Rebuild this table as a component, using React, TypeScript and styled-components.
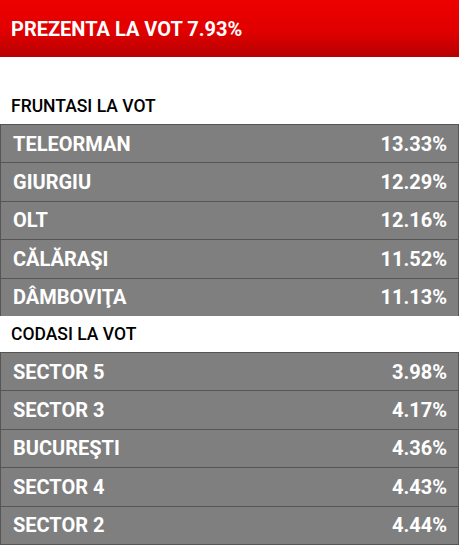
import styled, { createGlobalStyle } from 'styled-components'

const GlobalStyle = createGlobalStyle`
  body {
    margin: 0;
    background: #ffffff;
    font-family: Roboto, "Liberation Sans", Arial, sans-serif;
  }
`

const Widget = styled.div`
  width: 459px;
  display: flex;
  flex-direction: column;
`

const Banner = styled.div`
  height: 57px;
  display: flex;
  align-items: center;
  padding: 0 11px;
  background: linear-gradient(180deg, #ee0000 0%, #e00000 55%, #b70000 100%);
  color: #ffffff;
  font-size: 20px;
  font-weight: 700;
  box-sizing: border-box;
  margin-bottom: 31px;
`

const SectionLabel = styled.div`
  height: 36px;
  display: flex;
  align-items: center;
  padding: 0 11px;
  color: #000000;
  font-size: 17.5px;
  font-weight: 500;
`

const Table = styled.div`
  display: flex;
  flex-direction: column;
  border: 1px solid #555555;
  border-top: none;
  border-bottom: none;
`

const Row = styled.div<{ $last?: boolean }>`
  height: 37.4px;
  display: flex;
  align-items: center;
  justify-content: space-between;
  padding: 0 11px 0 12px;
  background: #7f7f7f;
  border-top: 1px solid #555555;
  border-bottom: ${(p) => (p.$last ? '1px solid #555555' : 'none')};
  color: #ffffff;
  font-size: 20px;
  font-weight: 700;
`

const fruntasi = [
  ['TELEORMAN', '13.33%'],
  ['GIURGIU', '12.29%'],
  ['OLT', '12.16%'],
  ['CĂLĂRAŞI', '11.52%'],
  ['DÂMBOVIŢA', '11.13%'],
]

const codasi = [
  ['SECTOR 5', '3.98%'],
  ['SECTOR 3', '4.17%'],
  ['BUCUREŞTI', '4.36%'],
  ['SECTOR 4', '4.43%'],
  ['SECTOR 2', '4.44%'],
]

const App = () => {
  return (
    <>
      <GlobalStyle />
      <Widget>
        <Banner>PREZENTA LA VOT 7.93%</Banner>
        <SectionLabel>FRUNTASI LA VOT</SectionLabel>
        <Table>
          {fruntasi.map(([name, value]) => (
            <Row key={name}>
              <span>{name}</span>
              <span>{value}</span>
            </Row>
          ))}
        </Table>
        <SectionLabel>CODASI LA VOT</SectionLabel>
        <Table>
          {codasi.map(([name, value], i) => (
            <Row key={name} $last={i === codasi.length - 1}>
              <span>{name}</span>
              <span>{value}</span>
            </Row>
          ))}
        </Table>
      </Widget>
    </>
  )
}

export default App
